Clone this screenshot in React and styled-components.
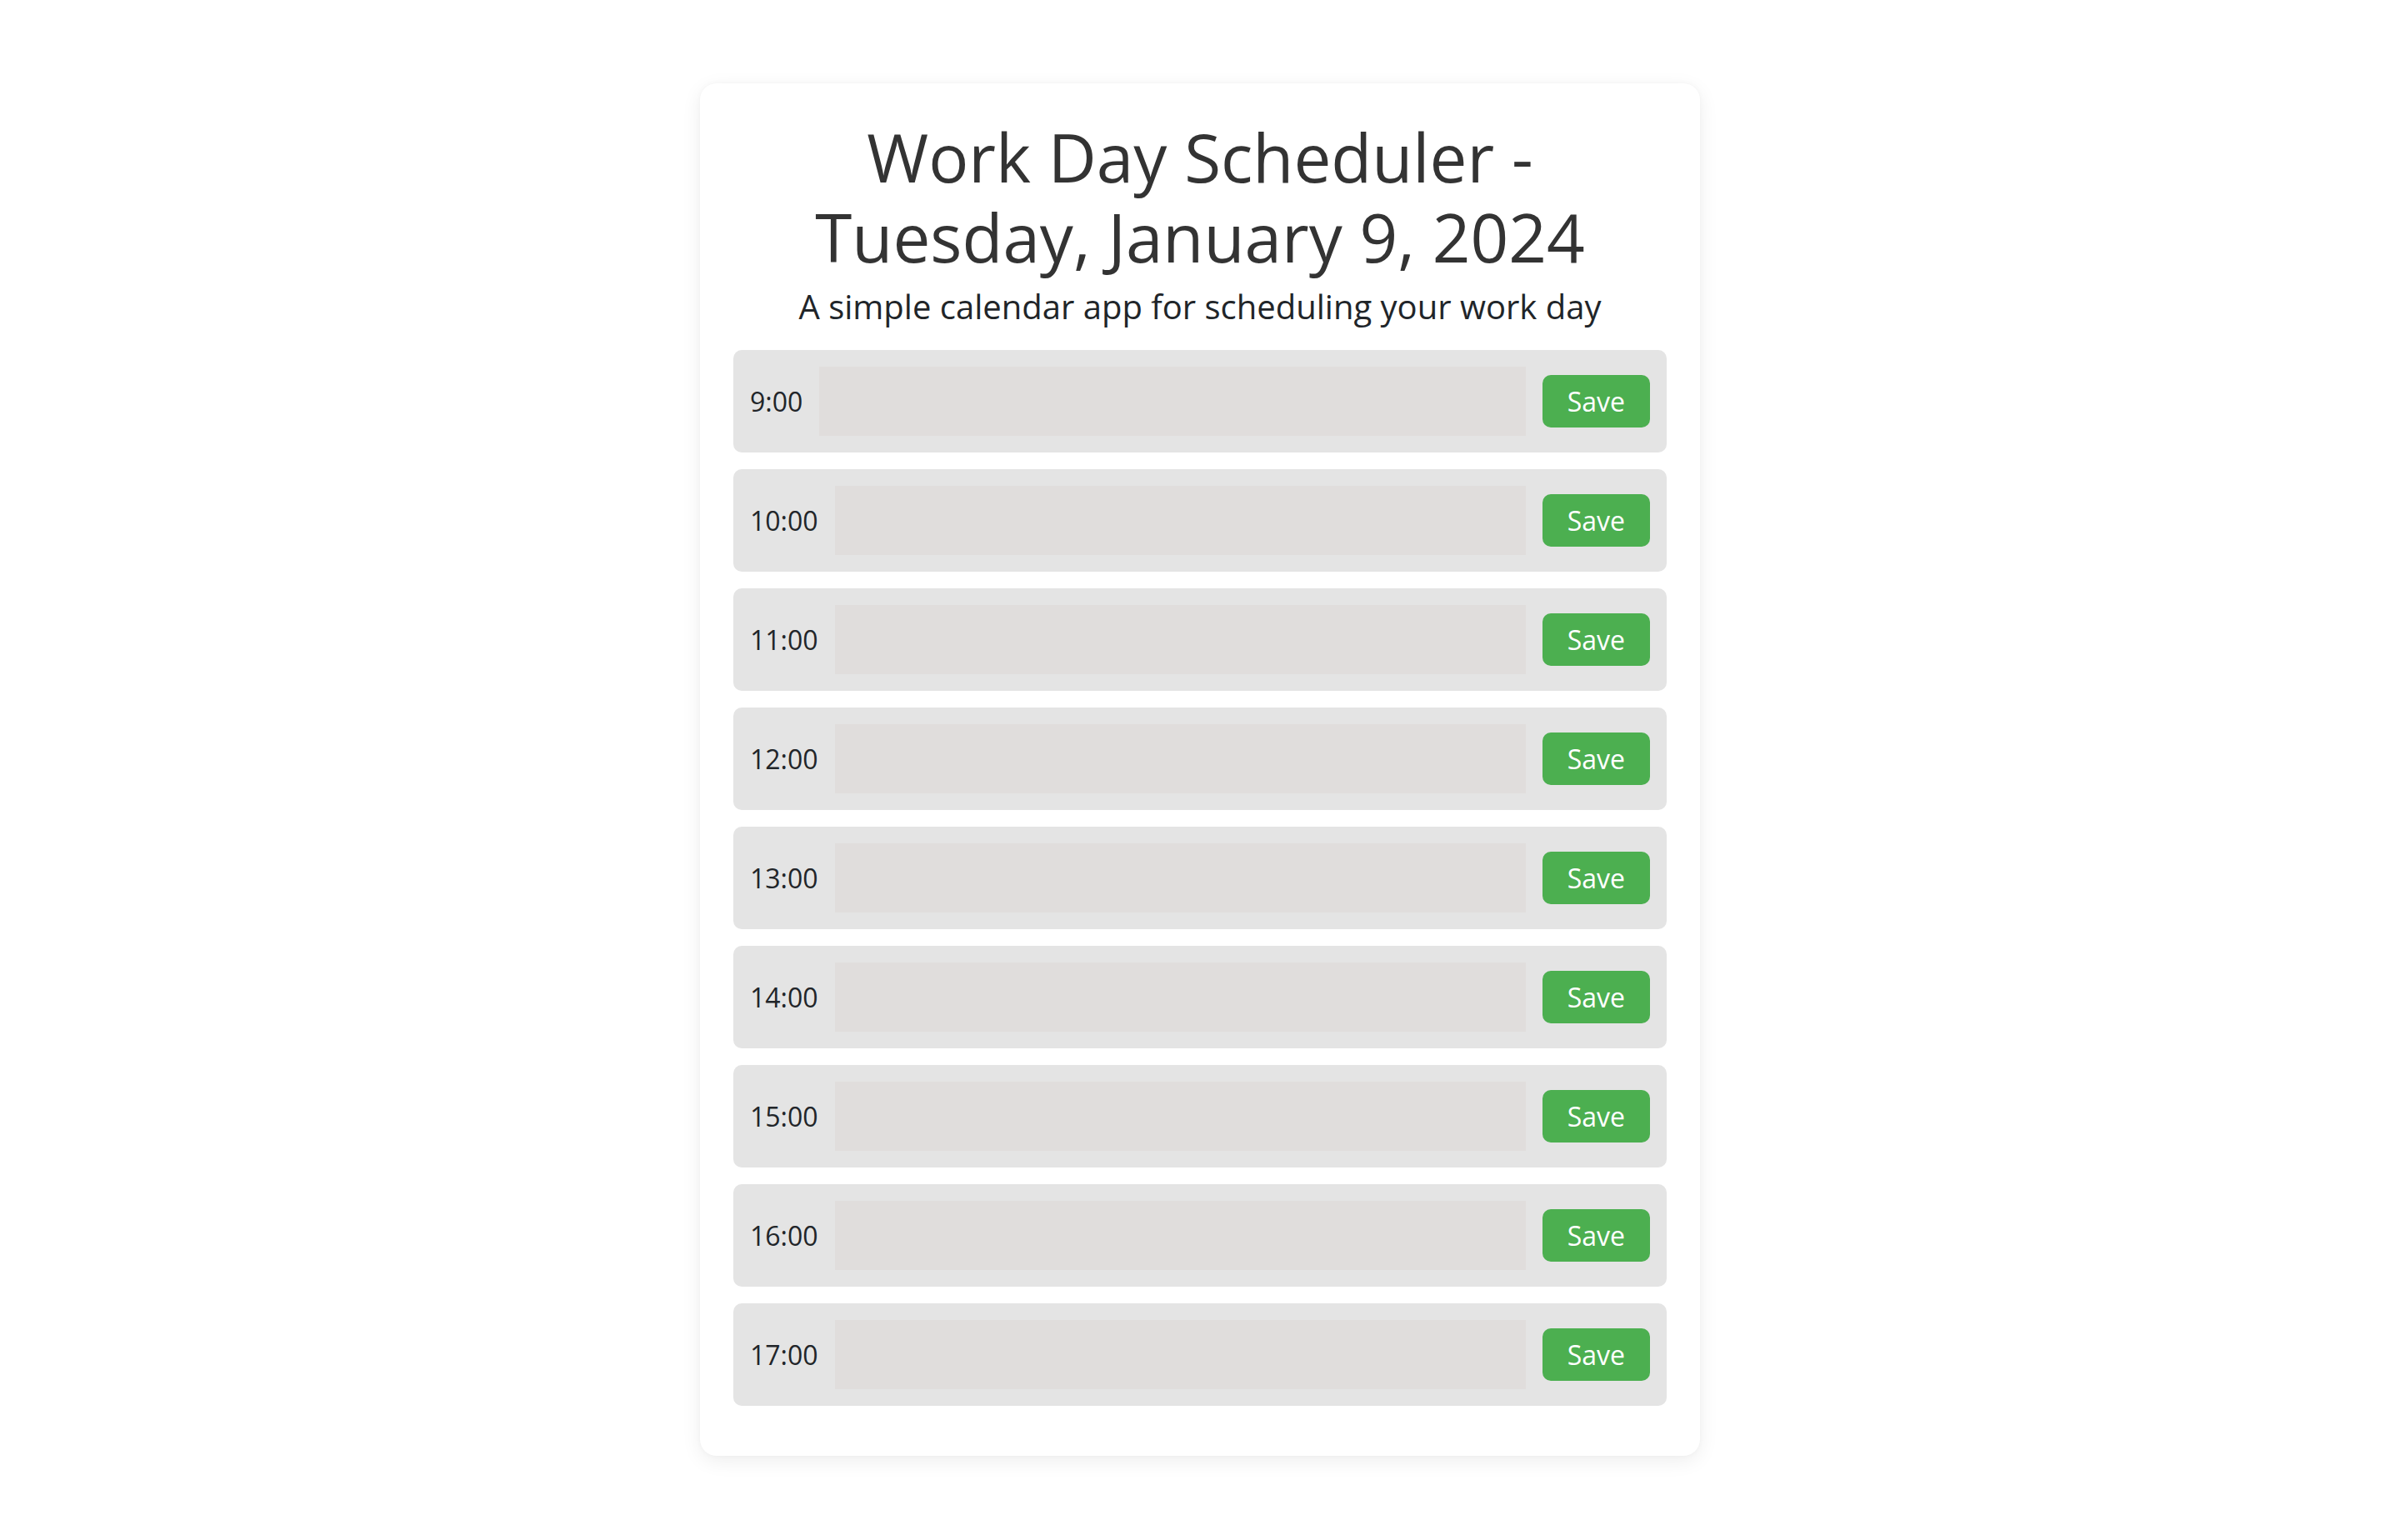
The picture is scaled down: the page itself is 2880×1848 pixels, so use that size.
import React from "react";
import styled, { createGlobalStyle } from "styled-components";

const GlobalStyle = createGlobalStyle`
  html, body {
    margin: 0;
    padding: 0;
    background: #ffffff;
  }
  body {
    font-family: "Open Sans", "Noto Sans", sans-serif;
    color: #212529;
  }
  * { box-sizing: border-box; }
`;

const Page = styled.main`
  display: flex;
  justify-content: center;
  padding: 100px 0 100px;
`;

const Card = styled.section`
  width: 1200px;
  background: #ffffff;
  border-radius: 20px;
  box-shadow: 0 6px 24px rgba(0, 0, 0, 0.07), 0 0 6px rgba(0, 0, 0, 0.03);
  padding: 40px 40px 60px;
  display: flex;
  flex-direction: column;
`;

const Title = styled.h1`
  margin: 0;
  font-size: 80px;
  line-height: 96px;
  font-weight: 400;
  color: #333333;
  text-align: center;
`;

const Subtitle = styled.p`
  margin: 6px 0 22px;
  font-size: 40px;
  line-height: 60px;
  font-weight: 400;
  color: #212529;
  text-align: center;
`;

const RowList = styled.div`
  display: flex;
  flex-direction: column;
  gap: 20px;
`;

const Row = styled.div`
  display: flex;
  align-items: center;
  gap: 20px;
  height: 123px;
  padding: 20px;
  background: #e4e4e4;
  border-radius: 10px;
`;

const HourLabel = styled.span`
  font-size: 32px;
  line-height: 44px;
  color: #212529;
  white-space: nowrap;
`;

const Entry = styled.textarea`
  flex: 1;
  align-self: stretch;
  border: none;
  outline: none;
  resize: none;
  background: #e0dddc;
  font-family: inherit;
  font-size: 32px;
  padding: 8px 12px;
  border-radius: 0;
`;

const SaveButton = styled.button`
  height: 63px;
  padding: 0 30px;
  border: none;
  border-radius: 10px;
  background: #4caf50;
  color: #ffffff;
  font-family: "Open Sans", "Noto Sans", sans-serif;
  font-size: 32px;
  line-height: 43px;
  cursor: pointer;
`;

const hours = [9, 10, 11, 12, 13, 14, 15, 16, 17];

export default function App() {
  return (
    <>
      <GlobalStyle />
      <Page>
        <Card>
          <Title>
            Work Day Scheduler -
            <br />
            Tuesday, January 9, 2024
          </Title>
          <Subtitle>A simple calendar app for scheduling your work day</Subtitle>
          <RowList>
            {hours.map((h) => (
              <Row key={h}>
                <HourLabel>{h}:00</HourLabel>
                <Entry aria-label={`${h}:00 entry`} />
                <SaveButton>Save</SaveButton>
              </Row>
            ))}
          </RowList>
        </Card>
      </Page>
    </>
  );
}
